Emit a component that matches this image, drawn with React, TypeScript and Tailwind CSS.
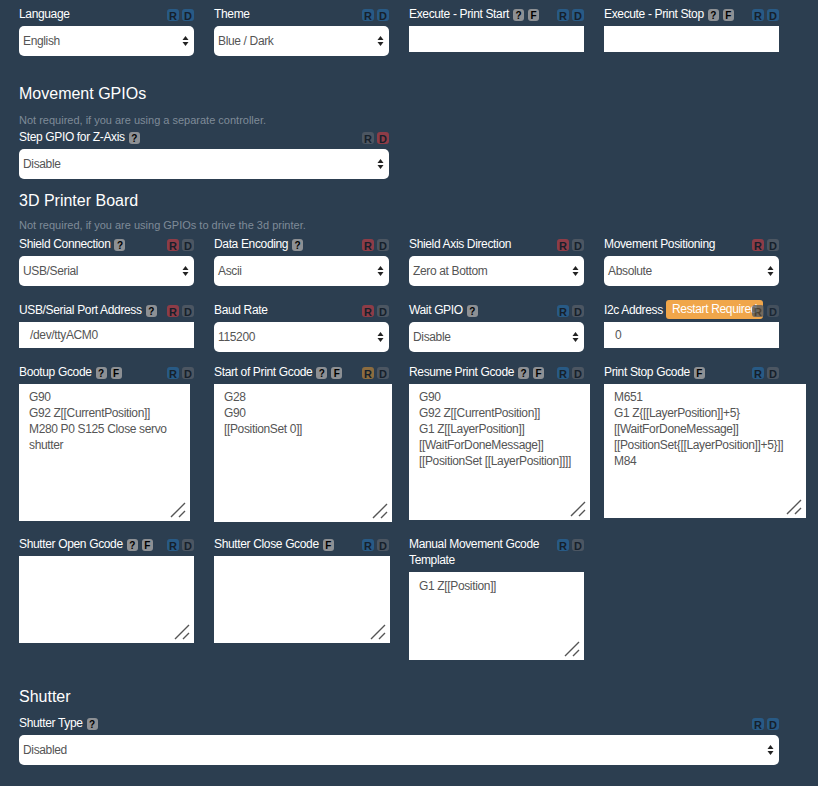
import React from 'react'

type Tone = 'blue' | 'gray' | 'red' | 'tan'

const TONE: Record<Tone, string> = {
  blue: 'bg-[#285a85]',
  gray: 'bg-[#4c5662]',
  red: 'bg-[#8e3c47]',
  tan: 'bg-[#8c6c3f]',
}

function Flag({ letter, tone }: { letter: string; tone: Tone }) {
  return (
    <span className={`flex h-3 w-3 items-end justify-center overflow-hidden rounded-[3px] text-[11px] font-bold leading-[10px] text-[#16202b] ${TONE[tone]}`}>
      {letter}
    </span>
  )
}

function Help({ letter }: { letter: string }) {
  return (
    <span className="ml-1 mt-[3px] inline-flex h-3 w-[11px] shrink-0 items-end justify-center overflow-hidden rounded-[3px] bg-[#8d9094] text-[10px] font-bold leading-[10px] text-black">
      {letter}
    </span>
  )
}

type LabelProps = {
  text: string
  help?: boolean
  f?: boolean
  r: Tone
  d: Tone
  restart?: boolean
  wrap?: boolean
}

function Label({ text, help, f, r, d, restart, wrap }: LabelProps) {
  return (
    <div className="relative mb-1 flex items-start justify-between">
      <div className="flex items-start">
        <span className={`text-[12px] leading-4 tracking-[-0.35px] text-white ${wrap ? 'w-[140px]' : 'whitespace-nowrap'}`}>{text}</span>
        {help && <Help letter="?" />}
        {f && <Help letter="F" />}
        {restart && (
          <span className="absolute left-[62px] top-[-2px] whitespace-nowrap rounded-[3px] bg-[#f0a64a] px-[6px] text-[12px] leading-[19px] tracking-[-0.35px] text-white">
            Restart Required
          </span>
        )}
      </div>
      <div className={`relative z-10 ml-2 mt-[3px] flex shrink-0 gap-[3px] ${restart ? 'opacity-75' : ''}`}>
        <Flag letter="R" tone={r} />
        <Flag letter="D" tone={d} />
      </div>
    </div>
  )
}

function Select({ value }: { value: string }) {
  return (
    <div className="relative flex h-[30px] items-center rounded-[5px] bg-white pl-1 text-[12px] tracking-[-0.35px] text-[#555]">
      {value}
      <svg className="absolute right-[5px] top-[9px]" width="7" height="12" viewBox="0 0 7 12">
        <path d="M3.5 1 L6.5 5 L0.5 5 Z M3.5 11 L6.5 7 L0.5 7 Z" fill="#222" />
      </svg>
    </div>
  )
}

function Input({ value }: { value?: string }) {
  return (
    <div className="flex h-[26px] items-center bg-white pl-[11px] text-[12px] tracking-[-0.35px] text-[#555]">{value}</div>
  )
}

function Area({ lines, w, h, pt = 'pt-[5px]' }: { lines: string[]; w: string; h: string; pt?: string }) {
  return (
    <div className={`relative bg-white px-[10px] text-[12px] leading-4 tracking-[-0.35px] text-[#555] ${w} ${h} ${pt}`}>
      {lines.map((l, i) => (
        <div key={i}>{l}</div>
      ))}
      <svg className="absolute bottom-[2px] right-[2px]" width="18" height="18" viewBox="0 0 18 18">
        <path d="M1 16 L15 2 M9 16 L15 10" stroke="#555" strokeWidth="1.4" />
      </svg>
    </div>
  )
}

const GRID = 'grid grid-cols-[repeat(4,175px)] items-start gap-x-5'

export default function App() {
  return (
    <div className="min-h-[786px] w-full bg-[#2c3e50] pl-[19px] pt-[6px] font-['Liberation_Sans',Arial,sans-serif]">
      {/* general */}
      <div className={GRID}>
        <div>
          <Label text="Language" r="blue" d="blue" />
          <Select value="English" />
        </div>
        <div>
          <Label text="Theme" r="blue" d="blue" />
          <Select value="Blue / Dark" />
        </div>
        <div>
          <Label text="Execute - Print Start" help f r="blue" d="blue" />
          <Input />
        </div>
        <div>
          <Label text="Execute - Print Stop" help f r="blue" d="blue" />
          <Input />
        </div>
      </div>

      {/* movement gpios */}
      <h2 className="mt-[28px] text-[16px] leading-5 text-white">Movement GPIOs</h2>
      <p className="mt-[9px] text-[11px] leading-[14px] text-[#7f8b98]">Not required, if you are using a separate controller.</p>
      <div className="mt-[2px] w-[370px]">
        <Label text="Step GPIO for Z-Axis" help r="gray" d="red" />
        <Select value="Disable" />
      </div>

      {/* 3d printer board */}
      <h2 className="mt-[12px] text-[16px] leading-5 text-white">3D Printer Board</h2>
      <p className="mt-[7px] text-[11px] leading-[14px] text-[#7f8b98]">Not required, if you are using GPIOs to drive the 3d printer.</p>
      <div className={`${GRID} mt-1`}>
        <div>
          <Label text="Shield Connection" help r="red" d="gray" />
          <Select value="USB/Serial" />
        </div>
        <div>
          <Label text="Data Encoding" help r="red" d="gray" />
          <Select value="Ascii" />
        </div>
        <div>
          <Label text="Shield Axis Direction" r="red" d="gray" />
          <Select value="Zero at Bottom" />
        </div>
        <div>
          <Label text="Movement Positioning" r="red" d="gray" />
          <Select value="Absolute" />
        </div>
      </div>

      <div className={`${GRID} mt-4`}>
        <div>
          <Label text="USB/Serial Port Address" help r="red" d="gray" />
          <Input value="/dev/ttyACM0" />
        </div>
        <div>
          <Label text="Baud Rate" r="red" d="gray" />
          <Select value="115200" />
        </div>
        <div>
          <Label text="Wait GPIO" help r="blue" d="gray" />
          <Select value="Disable" />
        </div>
        <div>
          <Label text="I2c Address" restart r="gray" d="gray" />
          <Input value="0" />
        </div>
      </div>

      <div className={`${GRID} mt-3`}>
        <div>
          <Label text="Bootup Gcode" help f r="blue" d="gray" />
          <Area w="w-[171px]" h="h-[137px]" lines={['G90', 'G92 Z[[CurrentPosition]]', 'M280 P0 S125 Close servo', 'shutter']} />
        </div>
        <div>
          <Label text="Start of Print Gcode" help f r="tan" d="gray" />
          <Area w="w-[178px]" h="h-[138px]" lines={['G28', 'G90', '[[PositionSet 0]]']} />
        </div>
        <div>
          <Label text="Resume Print Gcode" help f r="blue" d="gray" />
          <Area
            w="w-[181px]"
            h="h-[136px]"
            lines={['G90', 'G92 Z[[CurrentPosition]]', 'G1 Z[[LayerPosition]]', '[[WaitForDoneMessage]]', '[[PositionSet [[LayerPosition]]]]']}
          />
        </div>
        <div>
          <Label text="Print Stop Gcode" f r="blue" d="gray" />
          <Area
            w="w-[202px]"
            h="h-[134px]"
            lines={['M651', 'G1 Z{[[LayerPosition]]+5}', '[[WaitForDoneMessage]]', '[[PositionSet{[[LayerPosition]]+5}]]', 'M84']}
          />
        </div>
      </div>

      <div className={`${GRID} mt-[14px]`}>
        <div>
          <Label text="Shutter Open Gcode" help f r="blue" d="gray" />
          <Area w="w-[175px]" h="h-[87px]" lines={[]} />
        </div>
        <div>
          <Label text="Shutter Close Gcode" f r="blue" d="gray" />
          <Area w="w-[176px]" h="h-[87px]" lines={[]} />
        </div>
        <div>
          <Label text="Manual Movement Gcode Template" wrap r="blue" d="gray" />
          <Area w="w-[175px]" h="h-[88px]" pt="pt-[6px]" lines={['G1 Z[[Position]]']} />
        </div>
      </div>

      {/* shutter */}
      <h2 className="mt-[27px] text-[16px] leading-5 text-white">Shutter</h2>
      <div className="mt-2 w-[760px] pb-5">
        <Label text="Shutter Type" help r="blue" d="blue" />
        <Select value="Disabled" />
      </div>
    </div>
  )
}
